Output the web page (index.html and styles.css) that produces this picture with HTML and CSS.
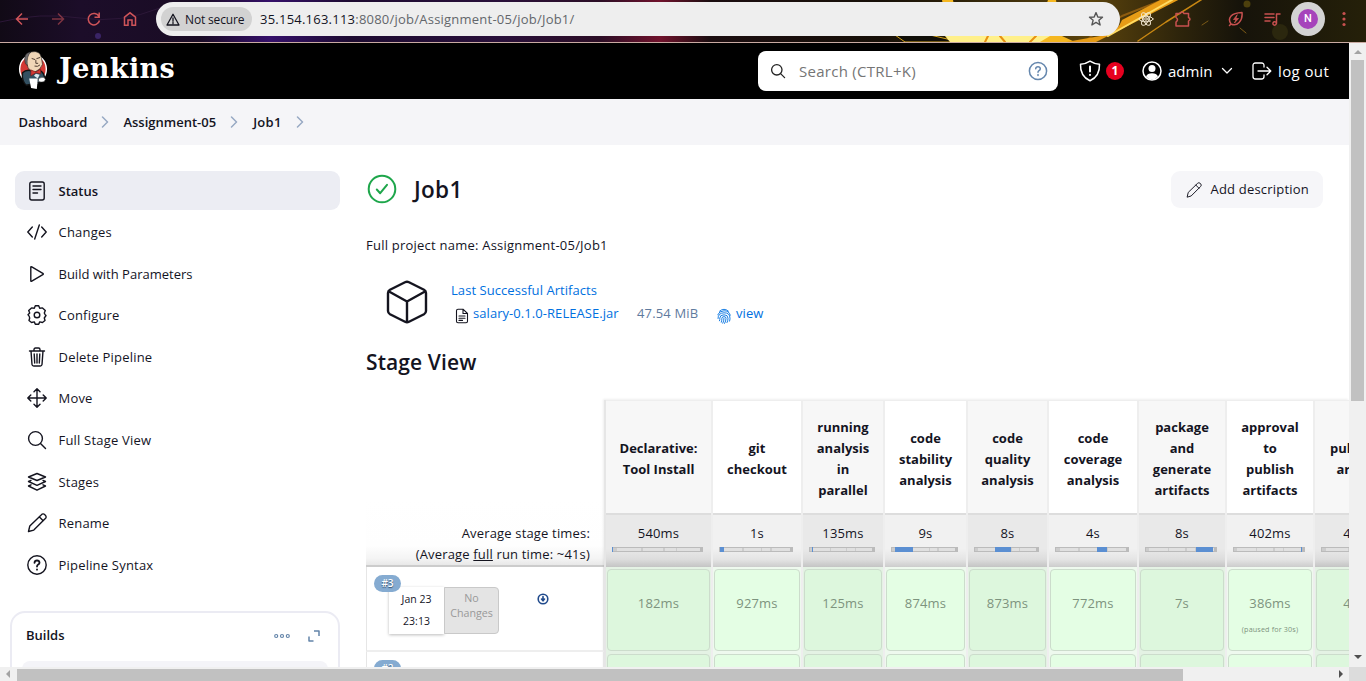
FILE: index.html
```html
<!DOCTYPE html>
<html lang="en">
<head>
<meta charset="utf-8">
<title>Job1 [Jenkins]</title>
<link rel="stylesheet" href="styles.css">
</head>
<body>
<svg width="0" height="0" class="defs">
  <symbol id="pencil" viewBox="0 0 20 20"><path d="M1.500 18.500L2.800 13 14.200 1.900Q16-.2 18.100 1.900T18.100 5.800L6.800 17.100ZM12.200 3.800L16.200 7.800"/></symbol>
  <symbol id="chev" viewBox="0 0 8 12"><path d="M1.500 1L6.500 6 1.500 11"/></symbol>
</svg>
<div class="browser">
  <svg class="wall" viewBox="0 0 1366 42" preserveAspectRatio="none">
    <path d="M0 22Q40 12 80 18T160 8" stroke="#2c1738" fill="none"/><circle cx="98" cy="36" r="3" fill="#3a2465"/>
    <path d="M895 35L905 42H960L930 35Z" fill="#110f08" stroke="#d6a51c"/>
    <path d="M942 0L950 42H1075L1062 36 1056 0H1048L1035 35H960L953 0Z" fill="#f5b720"/>
    <path d="M945 36H1050L1040 42H950Z" fill="#fff08a"/>
    <path d="M985 42L988 36M1005 42L1000 36M1030 42L1036 36" stroke="#e89010" stroke-width="2"/>
    <path d="M1085 42L1096 32 1122 16 1188 -10" stroke="#8f5d10" stroke-width="2" fill="none"/>
    <path d="M1112 34L1186 -4H1168L1122 20Q1118 31 1106 35L1066 42H1096Z" fill="#e79c16"/>
    <path d="M1108 36L1172 0" stroke="#ffdc62" stroke-width="2"/><path d="M1138 41L1166 22 1204 -2" stroke="#c88712" stroke-width="1.500"/>
    <path d="M1202 25L1208 21M1240 28L1246 33" stroke="#7c5a16"/><circle cx="1247" cy="4" r="3.500" fill="#4d400d"/><circle cx="1280" cy="32" r="8" fill="#2b270e"/>
  </svg>
  <div class="nav">
    <svg width="16" height="16" viewBox="0 0 16 16"><path d="M14 8H3M8 2.500L2.500 8 8 13.500"/></svg>
    <svg class="dim" width="16" height="16" viewBox="0 0 16 16"><path d="M2 8H13M8 2.500L13.500 8 8 13.500"/></svg>
    <svg width="16" height="16" viewBox="0 0 16 16"><path d="M13 5.500A5.700 5.700 0 1 0 13.500 9.500M13.200 1.500V6.200H8.500"/></svg>
    <svg width="16" height="16" viewBox="0 0 16 16"><path d="M2.500 14.200V6.200L8 1.800 13.500 6.200V14.200H10V9H6V14.200Z"/></svg>
  </div>
  <div class="omnibox">
    <span class="secure"><svg width="14" height="13" viewBox="0 0 14 13"><path d="M7 1.200L13 12H1ZM7 5V8.200M7 9.400V10.600"/></svg>Not secure</span>
    <span class="url">35.154.163.113<i>:8080/job/Assignment-05/job/Job1/</i></span>
    <svg class="star" width="16" height="16" viewBox="0 0 16 16"><path d="M8 1.600L9.800 6 14.500 6.300 10.900 9.300 12.100 14 8 11.400 3.900 14 5.100 9.300 1.500 6.300 6.200 6Z"/></svg>
  </div>
  <div class="ext">
    <svg class="react" width="16" height="16" viewBox="0 0 16 16"><circle cx="8" cy="8" r="1.300"/><ellipse cx="8" cy="8" rx="7" ry="2.800"/><ellipse cx="8" cy="8" rx="7" ry="2.800" transform="rotate(60 8 8)"/><ellipse cx="8" cy="8" rx="7" ry="2.800" transform="rotate(120 8 8)"/></svg>
    <svg class="puzzle" width="18" height="18" viewBox="0 0 18 18"><path d="M2 3.500H6Q8 .5 10 3.500H14.500V7.500Q17.500 9 14.500 11V16H2V12Q5 9.500 2 7.500Z"/></svg>
    <svg class="leaf" width="16" height="16" viewBox="0 0 16 16"><path d="M1.500 14.500L3 13C-1 7 3 2 14 1.500 15 10 9 16 3 13"/><path d="M9 4L5.500 8.500H8L6.500 12 10.500 7.500H8Z" stroke-width=".8" fill="currentColor"/></svg>
    <svg class="music" width="17" height="16" viewBox="0 0 17 16"><path d="M1 3H10M1 6.500H10M1 10H6M12.500 12.500V3H16M12.300 12.500A1.700 1.700 0 1 1 12.300 12.400"/></svg>
    <span class="avatar"><b>N</b></span>
    <svg class="dots" width="4" height="16" viewBox="0 0 4 16"><circle cx="2" cy="2.500" r="1.600"/><circle cx="2" cy="8" r="1.600"/><circle cx="2" cy="13.500" r="1.600"/></svg>
  </div>
</div>
<div class="frame">
<div class="page">
  <header class="top">
    <svg class="butler" width="30" height="40" viewBox="0 0 30 42">
      <ellipse cx="15" cy="20" rx="14" ry="15" fill="#d33833"/>
      <path d="M4 24Q8 20 14 22L22 21Q28 25 27 31L22 34 8 37Q3 33 4 24Z" fill="#335061" stroke="#111"/>
      <path d="M7 13Q6 4 13 2 23 0 24 9L25 15Q23 21 17 23 10 22 9 16Z" fill="#f0d6b7" stroke="#222" stroke-width=".7"/>
      <path d="M7 14Q4 3 13 2 8 6 9 16Z" fill="#6d6b6d" stroke="#222" stroke-width=".5"/>
      <path d="M14 9l3 1M19 9l3-1M18 11v3h2M17 17q3 1 5-1" stroke="#49372c" stroke-width="1" fill="none"/>
      <path d="M13 21L18 23 23 20V25L18 24 13 27Z" fill="#d33833" stroke="#7b1414" stroke-width=".6"/><path d="M16 27L18 25 22 26 20 30Z" fill="#dce9ef" stroke="none"/>
      <path d="M11 30H20L19 41 13 40Z" fill="#fff" stroke="none"/><path d="M21 30Q27 27 28 31 27 35 21 33Z" fill="#fff" stroke="#333" stroke-width=".5"/>
    </svg>
    <span class="brand">Jenkins</span>
    <div class="search">
      <svg width="16" height="16" viewBox="0 0 16 16"><circle cx="6.800" cy="6.800" r="5.200"/><path d="M10.600 10.600L14.600 14.600"/></svg>
      <span>Search (CTRL+K)</span>
      <svg class="help" width="20" height="20" viewBox="0 0 20 20"><circle cx="10" cy="10" r="8.600"/><path d="M7.700 7.800Q7.900 5.700 10 5.700T12.300 7.700Q12.300 8.800 11 9.600 10 10.200 10 11.300M10 13.500V14.600"/></svg>
    </div>
    <svg class="shield" width="22" height="22" viewBox="0 0 22 22"><path d="M11 1.200Q15 4 20.500 4.200 21 16 11 20.800 1 16 1.500 4.200 7 4 11 1.200Z"/><path d="M11 6.500V11.500M11 14.700V15" stroke-width="2"/></svg>
    <span class="badge">1</span>
    <svg class="user" width="20" height="20" viewBox="0 0 20 20"><circle cx="10" cy="10" r="9"/><circle cx="10" cy="7.500" r="3.500" fill="#fff" stroke="none"/><path d="M4 15.500Q5.500 12.200 10 12.200T16 15.500Q13.500 18.500 10 18.500T4 15.500Z" fill="#fff" stroke="none"/></svg>
    <span class="admin">admin</span>
    <svg class="down" width="12" height="8" viewBox="0 0 12 8"><path d="M1.500 1.500L6 6 10.500 1.500"/></svg>
    <svg class="exit" width="20" height="18" viewBox="0 0 20 18"><path d="M12 5V3.500Q12 1 9.500 1H3.500Q1 1 1 3.500V14.500Q1 17 3.500 17H9.500Q12 17 12 14.500V13M6 9H18.500M15 5.300L18.800 9 15 12.700"/></svg>
    <span class="logout">log out</span>
  </header>
  <nav class="crumbs"><span>Dashboard</span><svg><use href="#chev"/></svg><span>Assignment-05</span><svg><use href="#chev"/></svg><span>Job1</span><svg><use href="#chev"/></svg></nav>
  <div class="body">
    <aside class="side">
      <ul class="tasks">
        <li class="active"><svg viewBox="0 0 20 20"><rect x="2.800" y="1" width="14.400" height="18" rx="2"/><path d="M6 5H14M6 8.500H14M6 12H10.500"/></svg><span>Status</span></li>
        <li><svg viewBox="0 0 20 20"><path d="M5.300 5L.8 10 5.300 15M14.700 5L19.200 10 14.700 15M12.300 3L7.700 17"/></svg><span>Changes</span></li>
        <li><svg viewBox="0 0 20 20"><path d="M3.800 3.300Q3.800 2.300 4.800 2.800L15.800 9.300Q16.800 10 15.800 10.700L4.800 17.200Q3.800 17.700 3.800 16.700Z"/></svg><span class="wide">Build with Parameters</span></li>
        <li><svg viewBox="0 0 20 20"><circle cx="10" cy="10" r="2.800"/><path d="M8.300 .8H11.700L12.700 3.200 15.500 2.900 18.300 5.500 17.300 8Q18 10 19 10.500L17.300 13 18 15.500 15.500 17.500 12.700 16.900 11.700 19.200H8.300L7.300 16.900 4.500 17.500 2 15.500 2.700 13Q2.500 11 1 9.700L2.700 8 1.700 5.500 4.500 2.900 7.300 3.200Z"/></svg><span>Configure</span></li>
        <li><svg viewBox="0 0 20 20"><path d="M2.500 4H17.500M4 4L5 17.500Q5.200 19 6.700 19H13.300Q14.800 19 15 17.500L16 4M7 4V2.500Q7 1 8.500 1H11.500Q13 1 13 2.500V4M7.200 7L7.700 16M10 7V16M12.800 7L12.300 16"/></svg><span>Delete Pipeline</span></li>
        <li><svg viewBox="0 0 20 20"><path d="M10 1V19M1 10H19M7 3.800L10 .8 13 3.800M7 16.200L10 19.200 13 16.200M3.800 7L.8 10 3.800 13M16.200 7L19.200 10 16.200 13"/></svg><span>Move</span></li>
        <li><svg viewBox="0 0 20 20"><circle cx="8.500" cy="8.500" r="6.900"/><path d="M13.500 13.500L18.500 18.500"/></svg><span>Full Stage View</span></li>
        <li><svg viewBox="0 0 20 20"><path d="M10 1.500L18.500 5 10 8.500 1.500 5ZM4 8.400L1.500 9.500 10 13.300 18.500 9.500 16 8.400M4 12.800L1.500 14 10 18.200 18.500 14 16 12.800"/></svg><span>Stages</span></li>
        <li><svg><use href="#pencil"/></svg><span>Rename</span></li>
        <li><svg viewBox="0 0 20 20"><circle cx="10" cy="10" r="9.200"/><path d="M7.500 7.800Q7.700 5.500 10 5.500T12.500 7.700Q12.500 8.800 11.200 9.600 10 10.400 10 11.500M10 14.300V14.700" stroke-width="1.800"/></svg><span>Pipeline Syntax</span></li>
      </ul>
      <section class="builds">
        <div class="bhead"><b>Builds</b><svg width="16" height="6" viewBox="0 0 16 6"><circle cx="2.200" cy="3" r="1.500"/><circle cx="8" cy="3" r="1.500"/><circle cx="13.800" cy="3" r="1.500"/></svg><svg width="12" height="12" viewBox="0 0 12 12"><path d="M6 1H11V6M1 6.500V11H5.500"/></svg></div>
        <div class="filter"></div>
      </section>
    </aside>
    <main class="main">
      <div class="title">
        <svg width="30" height="30" viewBox="0 0 30 30"><circle cx="15" cy="15" r="13.300"/><path d="M9.800 15.500L13.200 19.200 20 10.800"/></svg>
        <h1>Job1</h1>
        <span class="add"><svg><use href="#pencil"/></svg>Add description</span>
      </div>
      <p class="full">Full project name: Assignment-05/Job1</p>
      <div class="art">
        <svg class="cube" width="42" height="44" viewBox="0 0 42 44"><path d="M19 2.300Q21 1.300 23 2.300L38 9.800Q40 11 40 13V31Q40 33 38 34.200L23 41.700Q21 42.700 19 41.700L4 34.200Q2 33 2 31V13Q2 11 4 9.800ZM3 11.500L21 21.500 39 11.500M21 21.500V42"/></svg>
        <div class="alist">
          <a>Last Successful Artifacts</a>
          <div class="file"><svg width="14" height="16" viewBox="0 0 14 16"><path d="M8 1.200H3Q1.500 1.200 1.500 2.700V13.300Q1.500 14.800 3 14.800H11Q12.500 14.800 12.500 13.300V5.500ZM8 1.200V5.500H12.500M4 8H10M4 10.200H10M4 12.400H7.500"/></svg><a class="jar">salary-0.1.0-RELEASE.jar</a><span>47.54 MiB</span>
          <svg class="finger" width="14" height="16" viewBox="0 0 14 16"><path d="M2.500 3.200Q7-.8 11.500 3.200M.7 6.800Q2 3 7 2.800T13.300 7.200M1 10.500Q1 5 7 4.800T13 10.500Q13 12 12.500 13.200M2.500 12.800Q3 11.500 2.800 10 3 6.800 7 6.800T11 10.200Q11 13 10 14.600M4.300 14.200Q5 12 4.900 10.300 5 8.600 7 8.600T9 10.300Q9 13 7.600 15.400M7 10.200Q7 13 5.800 15.200"/></svg><a>view</a></div>
        </div>
      </div>
      <h2>Stage View</h2>
      <div class="stages">
        <div class="runs">
          <div class="avg">Average stage times:<br>(Average <u>full</u> run time: ~41s)</div>
          <div class="run"><span class="num">#3</span>
            <div class="info"><div class="date">Jan 23<br>23:13</div><div class="nochg">No<br>Changes</div><svg width="12" height="12" viewBox="0 0 12 12"><circle cx="6" cy="6" r="4.800"/><path d="M6 3.500V7M4.500 6L6 7.800 7.500 6"/></svg></div>
          </div>
          <div class="run"><span class="num">#2</span></div>
        </div>
        <div class="cols" id="cols"></div>
      </div>
    </main>
  </div>
</div>
<div class="vbar"><i class="up"></i><div class="vthumb"></div><i class="dn"></i></div>
<div class="hbar"><i class="lf"></i><div class="hthumb"></div><i class="rt"></i></div>
<div class="corner"></div>
</div>
<script src="stages.js"></script>
</body>
</html>
```
FILE: styles.css
```css
*{box-sizing:border-box}
body{margin:0;height:681px;overflow:hidden;display:flex;flex-direction:column;font:13px/21px "Open Sans","Noto Sans",sans-serif;color:#14141f;background:#fff}
svg{fill:none;stroke:currentColor;stroke-width:1.5;stroke-linecap:round;stroke-linejoin:round;flex:none}
.defs{position:absolute}
a{color:#0070e0;letter-spacing:.06px}
.browser{height:43px;flex:none;border-bottom:1px solid #c9aaa2;position:relative;display:flex;padding:2px 0 0 14px;background:linear-gradient(90deg,#110a16 0,#1c0d29 80px,#1a0c25 200px,#35106a 270px,#1d0b31 350px,#29103a 500px,#2c0e26 600px,#70122c 660px,#1b0d10 710px,#171008 880px,#2c2108 960px,#5b430c 1090px,#2d240b 1180px,#16130a 1240px,#252009 1366px)}
.wall{position:absolute;left:0;top:0;width:100%;height:42px;stroke-width:1;stroke:none}
.nav{position:relative;display:flex;gap:20px;padding-top:9px;color:#cf5459;width:142px}
.nav svg{stroke-linecap:butt;stroke-linejoin:miter}
.dim{opacity:.55}
.omnibox{position:relative;width:964px;height:34px;border-radius:17px;background:#eee;display:flex;align-items:center;padding-left:5px;font-size:13px}
.secure{display:flex;align-items:center;gap:5px;width:91px;height:24px;border-radius:12px;background:#d2d2d2;padding-left:5px;font-size:12px;font-weight:500;white-space:nowrap;letter-spacing:-.15px}
.secure svg{stroke-width:1.3}
.url{margin-left:8px;flex:1;letter-spacing:.23px}
.url i{font-style:normal;color:#63666b}
.star{margin-right:16px;color:#555;stroke-width:1.4}
.ext{position:relative;display:flex;color:#c7504f;height:34px;align-items:center}
.react{color:#f1e6d0;margin-left:18px;stroke-width:1}.puzzle{margin-left:20px}.leaf{margin-left:36px}.music{margin-left:20px}
.avatar{width:34px;height:34px;border-radius:50%;background:#d3d3d3;display:grid;place-items:center;margin-left:10px}
.avatar b{width:20px;height:20px;border-radius:50%;background:#a644bb;color:#fff;font:500 11px/20px Roboto,sans-serif;text-align:center}
.dots{margin-left:17px;fill:currentColor;stroke:none}
.frame{flex:1;min-height:0;display:grid;grid-template:624px 14px/1349px 17px}
.page{overflow:hidden;display:flex;flex-direction:column}
.top{height:56px;flex:none;background:#000;color:#fff;display:flex;align-items:center;padding-left:18px;font-size:15px;white-space:nowrap}
.butler{margin-top:-2px}
.brand{font:bold 27px/40px "DejaVu Serif",serif;margin-left:11px;width:140px;margin-top:-5px;letter-spacing:.4px}
.search{margin-left:559px;width:300px;height:40px;border-radius:8px;background:#fff;color:#757575;display:flex;align-items:center;padding:0 10px 0 12px}
.search svg:first-child{color:#222;stroke-width:1.3}
.search span{flex:1;margin-left:13px;letter-spacing:.28px}
.help{color:#6486ad}
.shield{margin-left:21px}
.badge{margin-left:5px;width:18px;height:18px;border-radius:50%;background:#e6001f;font:bold 12px/18px "Open Sans",sans-serif;text-align:center}
.user{margin-left:18px}.admin{margin-left:6px;width:47px}.down{margin-left:6px;stroke-width:1.3}.exit{margin-left:19px;stroke-width:1.3}.logout{margin-left:6px;letter-spacing:.4px}
.crumbs{height:46px;flex:none;background:#f5f5f8;display:flex;align-items:center;padding-left:18.500px;font-weight:600}
.crumbs span:nth-of-type(3){letter-spacing:.3px;margin-left:1px}
.crumbs svg{width:8px;height:12px;color:#98a9c3;margin:0 14px}
.body{display:flex;flex:1}
.side{width:366px;flex:none;padding:26px 0 0 10px}
.tasks{list-style:none;margin:0;padding:0 0 0 5px;display:flex;flex-direction:column;gap:2.6px}
.tasks li{width:325px;height:39px;border-radius:9px;display:flex;align-items:center;padding-left:12px;gap:11.500px}
.tasks svg{width:20px;height:20px;stroke-width:1.4}
.tasks span{padding-top:1px;letter-spacing:.2px}
.tasks .active span{letter-spacing:0}
.tasks .wide{letter-spacing:0}
.active{background:#ecedf3;font-weight:600}
.builds{margin-top:27px;width:330px;height:90px;border:2px solid #ebebf3;border-radius:15px;padding:12px 10px 0 14px}
.bhead{display:flex;align-items:center;color:#6384a9}
.bhead b{flex:1;font-weight:600;color:#14141f}
.bhead svg{stroke-width:1.2}
.bhead svg:last-child{margin:0 8px 0 18px;stroke-linecap:butt;stroke-width:1.5}
.filter{height:38px;border-radius:8px;background:#f4f4f8;margin:15px 0 0 -4px}
.main{width:983px;flex:none;padding-top:26px}
.title{display:flex;height:38px;align-items:center;padding-left:1px;color:#1ea64b}
.title>svg{stroke-width:2;margin-top:-2px}
h1{font-size:22.500px;line-height:30px;font-weight:600;color:#14141f;margin:0 0 0 17px;flex:1;letter-spacing:.3px}
.add{width:152px;height:37px;border-radius:9px;background:#f6f6f9;color:#14141f;display:flex;align-items:center;gap:8.500px;margin:-1px 26px 0 0;padding-left:15px;white-space:nowrap;letter-spacing:.2px}
.add svg{width:16px;height:16px;stroke-width:1.2}
.full{margin:26px 0 0;letter-spacing:.23px}
.art{display:flex;margin-top:24px}
.cube{margin-left:20px;stroke-width:2.4}
.alist{margin-left:23px;display:flex;flex-direction:column;gap:2px}
.file{display:flex;align-items:center;margin-left:4px}
.file svg{stroke-width:1.1;margin-top:4px}
.jar{margin-left:4px;width:164px}
.file span{width:80px;color:#5f7b9e;letter-spacing:.15px}
.file .finger{color:#0070e0;stroke-width:.9}
.finger+a{margin-left:5px}
h2{font-size:21px;line-height:30px;font-weight:600;margin:23px 0;letter-spacing:.1px}
.stages{display:flex}
.runs{width:238px;flex:none;padding-top:100px}
.avg{height:67px;padding:23px 14px 0 0;text-align:right;border-bottom:2px solid #ccc;background:linear-gradient(#fff,#fefefe 70%,#f4f4f4 90%,#e8e8e8);letter-spacing:.17px}
.run{height:85px;border:1px solid #e6e6e6;border-top:0;border-bottom:2px solid #eee;padding:7px 0 0 7px;position:relative}
.num{position:absolute;left:7px;top:8px;width:27px;height:17px;border-radius:9px;background:#85abd1;color:#fff;font:600 10px/17px "Open Sans",sans-serif;text-align:center;text-shadow:0 1px 1px #34506e}
.info{display:flex;margin:13px 0 0 15px;font-size:11px}
.date{width:55px;height:47px;background:#fff;box-shadow:0 1px 3px #0004;line-height:22px;text-align:center;padding-top:1px;font-size:10.5px}
.nochg{width:55px;height:47px;background:#e4e4e4;border:1px solid #c9c9c9;border-radius:0 4px 4px 0;color:#999;line-height:15px;text-align:center;padding-top:3px;font-size:10.700px}
.info svg{margin:6px 0 0 38px;color:#204a8c;stroke-width:1.6}
.cols{display:flex;width:745px;overflow:hidden;border-left:2px solid #e6e6e6;box-shadow:-1px -1px 2px #0001}
.col{flex:none;border-right:2px solid #eee;text-align:center}
.name{height:115px;padding-top:1px;display:grid;place-items:center;font-weight:700;border-top:1px solid #eee;border-bottom:2px solid #ddd;background:#fff;white-space:nowrap}
.name span{padding-top:3px}
.col:nth-child(odd) .name{background:#f7f7f7}
.time{height:52px;padding:8px 8px 0 6px;letter-spacing:.15px;background:linear-gradient(#f1f1f1 65%,#e5e5e5 85%,#ccc)}
.time span{display:block;padding-left:2px}
.col:nth-child(odd) .time{background:linear-gradient(#e9e9e9 65%,#ddd 85%,#c4c4c4)}
.track{height:5px;margin-top:3px;position:relative;border:1px solid #bbb;border-width:1px 3px 1px 1px;background:linear-gradient(90deg,#ccc 5%,#e0e0e0 5% 32%,#ccc 32% 34%,#e0e0e0 34% 58%,#ccc 58% 60%,#e0e0e0 60% 72%,#ccc 72% 74%,#e0e0e0 74%)}
.track i{position:absolute;top:-1px;height:5px;background:#5b8fd2}
.cell{height:85px;padding:2px 1px 1px;background:#eef9ee}
.col:nth-child(odd) .cell{background:#e4f2e4}
.cell div{height:82px;border:1px solid #ccdccc;border-radius:4px;background:#e4fee4;color:#7d937e;padding-top:23px;letter-spacing:.15px}
.col:nth-child(odd) .cell div{background:#ddf7dd}
.cell small{display:block;font-size:7.2px;line-height:12px;margin-top:9px;white-space:nowrap}
.vbar{background:#f0f0f0;display:flex;flex-direction:column;align-items:center}
.vthumb{width:13px;height:341px;background:#c1c1c1;margin-top:6px}
.hbar{background:#f0f0f0;display:flex;align-items:center;padding-left:6px}
.hthumb{width:1166px;height:12px;background:#c1c1c1;margin:1px 156px 0 7px}
.corner{background:#dcdcdc}
.up,.dn{border:4px solid transparent}.up{border-top:0;border-bottom-color:#a3a3a3;margin-top:7px}.dn{border-bottom:0;border-top-color:#505050;margin-top:254px}
.lf,.rt{border:4px solid transparent}.lf{border-left:0;border-right-color:#a3a3a3}.rt{border-right:0;border-left-color:#505050}
```
FILE: stages.js
```js
// name lines, average, last run, column width, bar start %, bar width %
const stages = [
  [["Declarative:", "Tool Install"], "540ms", "182ms", 107, -1, 1],
  [["git", "checkout"], "1s", "927ms", 90, 0, 5],
  [["running", "analysis", "in", "parallel"], "135ms", "125ms", 82, 3, 2],
  [["code", "stability", "analysis"], "9s", "874ms", 83, 5, 28],
  [["code", "quality", "analysis"], "8s", "873ms", 81, 33, 26],
  [["code", "coverage", "analysis"], "4s", "772ms", 90, 59, 14],
  [["package", "and", "generate", "artifacts"], "8s", "7s", 88, 74, 24],
  [["approval", "to", "publish", "artifacts"], "402ms", "386ms", 88, 98, 1.5],
  [["publishing", "artifacts"], "403ms", "402ms", 100, 0, 0]
];
document.getElementById("cols").innerHTML = stages.map(([n, avg, t, w, s, b]) =>
  `<div class="col" style="width:${w}px"><div class="name"><span>${n.join("<br>")}</span></div>
   <div class="time"><span>${avg}</span><div class="track"><i style="left:${s}%;width:${b}%"></i></div></div>
   <div class="cell"><div>${t}${avg === "402ms" ? "<small>(paused for 30s)</small>" : ""}</div></div>
   <div class="cell"><div></div></div></div>`).join("");
```
